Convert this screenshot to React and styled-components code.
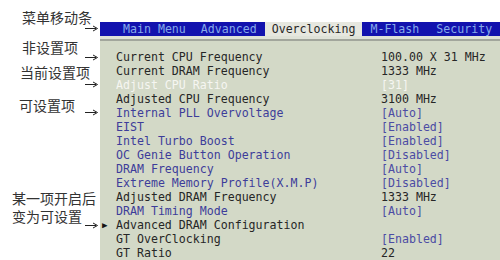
import React from 'react';
import styled, { createGlobalStyle } from 'styled-components';

const GlobalStyle = createGlobalStyle`
  html, body {
    margin: 0;
    padding: 0;
    background: #ffffff;
  }
`;

const Page = styled.div`
  display: flex;
  width: 500px;
  height: 260px;
  overflow: hidden;
  background: #ffffff;
`;

const Notes = styled.div`
  width: 100px;
  flex: none;
  display: flex;
  flex-direction: column;
  font-family: 'Noto Sans CJK SC', 'Noto Sans', sans-serif;
  font-size: 14px;
  color: #333333;
`;

const Note = styled.div`
  display: flex;
  flex-direction: column;
  margin-top: ${({ $top }) => $top}px;
`;

const NoteLabel = styled.div`
  line-height: ${({ $lines }) => ($lines ? 18 : 16)}px;
  height: ${({ $lines }) => ($lines ? $lines * 18 : 16)}px;
  padding-left: ${({ $indent }) => $indent}px;
  white-space: pre;
`;

const ArrowWrap = styled.div`
  align-self: flex-end;
  margin-right: 2px;
  margin-top: ${({ $gap }) => $gap}px;
  height: 7px;
  svg {
    display: block;
  }
`;

const Bios = styled.div`
  flex: 1;
  display: flex;
  flex-direction: column;
  margin-top: 22px;
  font-family: 'DejaVu Sans Mono', 'Liberation Mono', monospace;
  font-size: 11.6px;
`;

const MenuBar = styled.div`
  display: flex;
  height: 14px;
  padding-left: 16px;
  gap: 1px;
  background: #1212ae;
  line-height: 14px;
`;

const Tab = styled.div`
  padding: 0 7px;
  white-space: nowrap;
  color: ${({ $active }) => ($active ? '#262626' : '#86aaea')};
  background: ${({ $active }) => ($active ? '#e6e7df' : 'transparent')};
  margin-left: ${({ $shift }) => $shift || 0}px;
`;

const Band = styled.div`
  height: 4px;
  background: #dfe2d8;
  border-bottom: 2px solid #a2a69c;
`;

const Panel = styled.div`
  flex: 1;
  background: #d3d9c7;
  padding-top: 9px;
`;

const Row = styled.div`
  display: grid;
  grid-template-columns: 16px 265px 1fr;
  height: 14px;
  line-height: 14px;
  white-space: nowrap;
`;

const tone = {
  fixed: '#262626',
  edit: '#3d3d9a',
  current: '#f6f6f2',
};

const Marker = styled.span`
  font-size: 9px;
  color: #141414;
  padding-left: 2px;
`;

const Name = styled.span`
  color: ${({ $tone }) => tone[$tone]};
`;

const Value = styled.span`
  color: ${({ $tone }) => ($tone === 'edit' ? '#4c4ca4' : tone[$tone])};
`;

function Arrow({ gap }) {
  return (
    <ArrowWrap $gap={gap}>
      <svg width="13" height="7" viewBox="0 0 13 7">
        <line x1="0" y1="3.5" x2="11" y2="3.5" stroke="#222" strokeWidth="1" />
        <path d="M8 1 L12.5 3.5 L8 6" fill="none" stroke="#222" strokeWidth="1" />
      </svg>
    </ArrowWrap>
  );
}

const tabs = [
  { label: 'Main Menu' },
  { label: 'Advanced' },
  { label: 'Overclocking', active: true },
  { label: 'M-Flash' },
  { label: 'Security', shift: 2 },
];

const rows = [
  ['Current CPU Frequency', '100.00 X 31 MHz', 'fixed'],
  ['Current DRAM Frequency', '1333 MHz', 'fixed'],
  ['Adjust CPU Ratio', '[31]', 'current'],
  ['Adjusted CPU Frequency', '3100 MHz', 'fixed'],
  ['Internal PLL Overvoltage', '[Auto]', 'edit'],
  ['EIST', '[Enabled]', 'edit'],
  ['Intel Turbo Boost', '[Enabled]', 'edit'],
  ['OC Genie Button Operation', '[Disabled]', 'edit'],
  ['DRAM Frequency', '[Auto]', 'edit'],
  ['Extreme Memory Profile(X.M.P)', '[Disabled]', 'edit'],
  ['Adjusted DRAM Frequency', '1333 MHz', 'fixed'],
  ['DRAM Timing Mode', '[Auto]', 'edit'],
  ['Advanced DRAM Configuration', '', 'fixed', true],
  ['GT OverClocking', '[Enabled]', 'fixed', false, 'edit'],
  ['GT Ratio', '22', 'fixed'],
];

export default function App() {
  return (
    <>
      <GlobalStyle />
      <Page>
        <Notes>
          <Note $top={9}>
            <NoteLabel $indent={22}>菜单移动条</NoteLabel>
            <Arrow gap={0} />
          </Note>
          <Note $top={7}>
            <NoteLabel $indent={22}>非设置项</NoteLabel>
            <Arrow gap={-1} />
          </Note>
          <Note $top={3}>
            <NoteLabel $indent={20}>当前设置项</NoteLabel>
            <Arrow gap={1} />
          </Note>
          <Note $top={9}>
            <NoteLabel $indent={19}>可设置项</NoteLabel>
            <Arrow gap={-4} />
          </Note>
          <Note $top={73}>
            <NoteLabel $indent={12} $lines={2}>{'某一项开启后\n变为可设置'}</NoteLabel>
            <Arrow gap={-3} />
          </Note>
        </Notes>
        <Bios>
          <MenuBar>
            {tabs.map((t) => (
              <Tab key={t.label} $active={t.active} $shift={t.shift}>
                {t.label}
              </Tab>
            ))}
          </MenuBar>
          <Band />
          <Panel>
            {rows.map(([name, value, kind, sub, valueKind]) => (
              <Row key={name}>
                <Marker>{sub ? '▶' : ''}</Marker>
                <Name $tone={kind}>{name}</Name>
                <Value $tone={valueKind || kind}>{value}</Value>
              </Row>
            ))}
          </Panel>
        </Bios>
      </Page>
    </>
  );
}
